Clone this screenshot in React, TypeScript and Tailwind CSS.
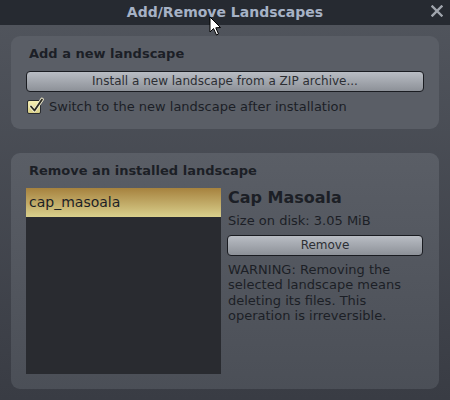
import React from "react";

function CheckBox() {
  return (
    <span className="relative block h-[14px] w-[14px] shrink-0 rounded-[2px] border border-[#2a2c30] bg-gradient-to-b from-[#f6efb4] to-[#d9cf86]">
      <svg
        viewBox="0 0 16 16"
        className="absolute -top-[4px] left-[0px] h-[17px] w-[16px]"
      >
        <path
          d="M3 9 L6.5 13 L14 2"
          fill="none"
          stroke="#f3eed0"
          strokeWidth="3.6"
          strokeLinecap="round"
          strokeLinejoin="round"
        />
        <path
          d="M3 9 L6.5 13 L14 2"
          fill="none"
          stroke="#2b2a22"
          strokeWidth="1.8"
          strokeLinecap="round"
          strokeLinejoin="round"
        />
      </svg>
    </span>
  );
}

function Cursor() {
  return (
    <svg
      viewBox="0 0 13 21"
      className="pointer-events-none absolute left-[209px] top-[16px] h-[21px] w-[13px]"
    >
      <path
        d="M1 1 L1 16 L4.5 12.5 L7.5 19 L9.5 18 L6.8 11.8 L11.5 11.5 Z"
        fill="#ffffff"
        stroke="#000000"
        strokeWidth="1"
        strokeLinejoin="round"
      />
    </svg>
  );
}

export default function App() {
  return (
    <div className="relative h-[400px] w-[450px] overflow-hidden bg-[#383b43] font-['DejaVu_Sans',sans-serif] text-[13px] leading-[15px] text-[#1c1f26]">
      {/* title bar */}
      <div className="relative flex h-[25px] items-center justify-center bg-[#262a31]">
        <span className="text-[14px] font-bold leading-[17px] text-[#a6b2c6]">
          Add/Remove Landscapes
        </span>
        <svg
          viewBox="0 0 12 12"
          className="absolute right-[7px] top-[5px] h-[12px] w-[12px]"
        >
          <path
            d="M1.5 1.5 L10.5 10.5 M10.5 1.5 L1.5 10.5"
            stroke="#a0a5ad"
            strokeWidth="2.4"
            strokeLinecap="square"
          />
        </svg>
      </div>

      <div className="flex h-[375px] flex-col gap-[24px] bg-gradient-to-b from-[#50545c] to-[#393c44] px-[11px] pt-[11px]">
        {/* add panel */}
        <section className="flex h-[93px] flex-col rounded-[9px] bg-[#5a5e66] px-[15px] pt-[10px]">
          <h2 className="pl-[3px] font-bold">Add a new landscape</h2>
          <button
            type="button"
            className="mt-[10px] h-[21px] w-[398px] rounded-[4px] border border-[#1a1c21] bg-gradient-to-b from-[#b9bdc4] to-[#8d9198] text-[12px] leading-[15px] text-[#2c2e33]"
          >
            Install a new landscape from a ZIP archive...
          </button>
          <label className="mt-[7px] flex items-center gap-[8px] pl-[1px]">
            <CheckBox />
            <span>Switch to the new landscape after installation</span>
          </label>
        </section>

        {/* remove panel */}
        <section className="flex h-[236px] flex-col rounded-[9px] bg-gradient-to-b from-[#5a5e66] to-[#4b4f57] px-[15px] pt-[10px]">
          <h2 className="pl-[3px] font-bold">Remove an installed landscape</h2>
          <div className="mt-[10px] flex gap-[6px]">
            <div className="h-[186px] w-[195px] bg-[#292b30]">
              <div className="flex h-[29px] items-center bg-gradient-to-b from-[#a6823e] to-[#d9d08c] pl-[3px] text-[14px] text-[#1c1f26]">
                cap_masoala
              </div>
            </div>
            <div className="flex w-[196px] flex-col">
              <h3 className="pl-[1px] text-[16px] font-bold leading-[19px]">
                Cap Masoala
              </h3>
              <p className="mt-[6px] pl-[1px]">Size on disk: 3.05 MiB</p>
              <button
                type="button"
                className="mt-[7px] h-[21px] w-[196px] rounded-[4px] border border-[#1a1c21] bg-gradient-to-b from-[#b9bdc4] to-[#8d9198] text-[12px] leading-[15px] text-[#2c2e33]"
              >
                Remove
              </button>
              <p className="mt-[6px] pl-[1px] leading-[15.4px]">
                WARNING: Removing the selected landscape means deleting its
                files. This operation is irreversible.
              </p>
            </div>
          </div>
        </section>
      </div>

      <Cursor />
    </div>
  );
}
